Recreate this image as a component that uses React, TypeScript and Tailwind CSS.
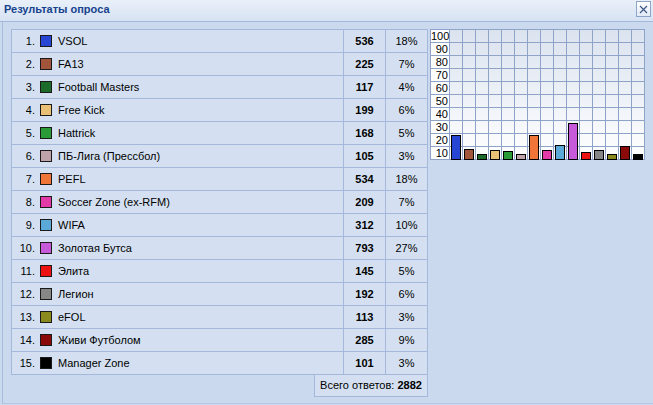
import React from "react";

const items = [
  { name: "VSOL", count: 536, pct: "18%", color: "#2746d3" },
  { name: "FA13", count: 225, pct: "7%", color: "#a2553a" },
  { name: "Football Masters", count: 117, pct: "4%", color: "#1d6b2a" },
  { name: "Free Kick", count: 199, pct: "6%", color: "#e8c177" },
  { name: "Hattrick", count: 168, pct: "5%", color: "#2a9b36" },
  { name: "ПБ-Лига (Прессбол)", count: 105, pct: "3%", color: "#bfa3ab" },
  { name: "PEFL", count: 534, pct: "18%", color: "#ef7638" },
  { name: "Soccer Zone (ex-RFM)", count: 209, pct: "7%", color: "#e23aa6" },
  { name: "WIFA", count: 312, pct: "10%", color: "#5aa9d9" },
  { name: "Золотая Бутса", count: 793, pct: "27%", color: "#c65ad9" },
  { name: "Элита", count: 145, pct: "5%", color: "#ee1313" },
  { name: "Легион", count: 192, pct: "6%", color: "#878787" },
  { name: "eFOL", count: 113, pct: "3%", color: "#8b8a1f" },
  { name: "Живи Футболом", count: 285, pct: "9%", color: "#8a0a0a" },
  { name: "Manager Zone", count: 101, pct: "3%", color: "#000000" },
];
const total = 2882;
const labels = [100, 90, 80, 70, 60, 50, 40, 30, 20, 10];

export default function App() {
  return (
    <div className="w-[653px] h-[405px] bg-[#cbd9ee] font-['Liberation_Sans',Arial,sans-serif] text-[11px] text-black flex flex-col overflow-hidden">
      {/* title bar */}
      <div className="h-[22px] shrink-0 flex items-center justify-between pl-[4px] pr-[2px] border-b border-[#a3b9da] bg-[linear-gradient(to_bottom,#e9f0f9,#d6e2f3)]">
        <span className="font-bold text-[#15428b] text-[11px] leading-none -mt-[3px]">Результаты опроса</span>
        <div className="w-[15px] h-[16px] -mt-[3px] border border-[#8ea4c7] bg-[linear-gradient(to_bottom,#ffffff,#e2eaf6)] flex items-center justify-center">
          <svg width="9" height="9" viewBox="0 0 9 9">
            <path d="M1 1 L8 8 M8 1 L1 8" stroke="#3b5a8a" strokeWidth="1.2" />
          </svg>
        </div>
      </div>
      {/* body */}
      <div className="flex-1 flex border-l border-[#a9bedd] ml-[2px] border-b border-b-[#b6c8e4] mb-[1px]">
        <div className="flex items-start pt-[7px] pl-[8px]">
          <div className="flex flex-col">
            <div className="w-[417px] border-t border-l border-[#a3b8da] bg-[#d4e0f1]">
              {items.map((it, i) => (
                <div key={i} className="flex h-[23px] border-b border-[#a3b8da]">
                  <div className="w-[331px] flex items-center">
                    <span className="w-[23px] text-right">{i + 1}.</span>
                    <span
                      className="ml-[5px] w-[12px] h-[12px] border border-[#1a1a1a]"
                      style={{ backgroundColor: it.color }}
                    />
                    <span className="ml-[6px]">{it.name}</span>
                  </div>
                  <div className="w-[42px] border-l border-[#a3b8da] flex items-center justify-center font-bold">
                    {it.count}
                  </div>
                  <div className="w-[43px] border-l border-r border-[#a3b8da] flex items-center justify-center">
                    {it.pct}
                  </div>
                </div>
              ))}
            </div>
            <div className="self-end w-[114px] h-[22px] border-l border-r border-b border-[#a3b8da] bg-[#d4e0f1] flex items-center justify-center">
              Всего ответов:&nbsp;<b>{total}</b>
            </div>
          </div>
          {/* chart */}
          <div className="ml-[2px] flex border-t border-l border-[#8fa3c8]">
            <div className="w-[19px] flex flex-col bg-white">
              {labels.map((l) => (
                <div key={l} className="h-[13px] border-b border-r border-[#8fa3c8] text-right pr-[1px] leading-[12px] text-[11px]">
                  {l}
                </div>
              ))}
            </div>
            <div className="relative w-[195px] bg-[linear-gradient(to_bottom,#dbe3ef,#ffffff)]">
              <div className="grid grid-cols-[repeat(15,13px)] grid-rows-[repeat(10,13px)]">
                {Array.from({ length: 150 }).map((_, k) => (
                  <div key={k} className="border-r border-b border-[#8fa3c8]" />
                ))}
              </div>
              <div className="absolute inset-0 flex items-end">
                {items.map((it, i) => (
                  <div key={i} className="w-[13px] h-full flex items-end pl-[1px]">
                    <div
                      className="w-[10px] border border-black"
                      style={{
                        backgroundColor: it.color,
                        height: `${Math.round((it.count / total) * 130) + 1}px`,
                      }}
                    />
                  </div>
                ))}
              </div>
            </div>
          </div>
        </div>
      </div>
    </div>
  );
}
